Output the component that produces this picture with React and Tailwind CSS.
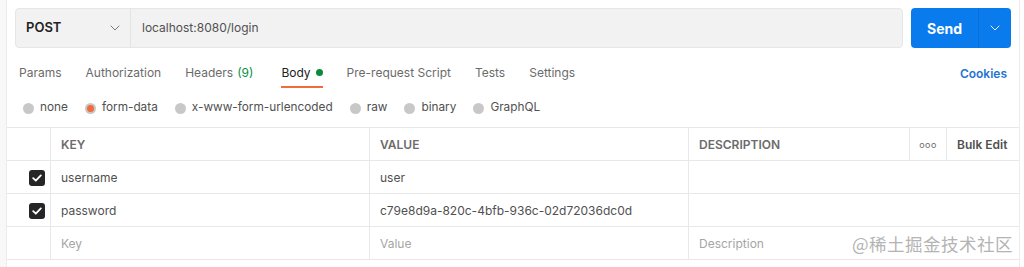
import React from 'react';

const TABS = [
  { label: 'Params' },
  { label: 'Authorization' },
  { label: 'Headers', count: '(9)' },
  { label: 'Body', active: true, dot: true },
  { label: 'Pre-request Script' },
  { label: 'Tests' },
  { label: 'Settings' },
];

const BODY_TYPES = ['none', 'form-data', 'x-www-form-urlencoded', 'raw', 'binary', 'GraphQL'];

const ROWS = [
  { key: 'username', value: 'user' },
  { key: 'password', value: 'c79e8d9a-820c-4bfb-936c-02d72036dc0d' },
];

function Chevron({ className }) {
  return (
    <svg width="10" height="6" viewBox="0 0 10 6" className={className} fill="none">
      <path d="M1 1l4 4 4-4" stroke="currentColor" strokeWidth="1" strokeLinecap="round" strokeLinejoin="round" />
    </svg>
  );
}

function Check() {
  return (
    <span className="w-[16px] h-[16px] rounded-[3px] bg-[#262626] flex items-center justify-center">
      <svg width="10" height="8" viewBox="0 0 10 8" fill="none">
        <path d="M1.2 4.2l2.6 2.5L8.8 1.4" stroke="white" strokeWidth="1.8" strokeLinecap="round" strokeLinejoin="round" />
      </svg>
    </span>
  );
}

export default function App() {
  return (
    <div className="w-[1024px] h-[267px] bg-white flex relative overflow-hidden font-['Inter',sans-serif] text-[#505050]">
      {/* left edge strip */}
      <div className="w-[7px] shrink-0 bg-[#f8f8f8] border-r border-[#ececec]" />

      <div className="flex-1 flex flex-col">
        {/* request bar */}
        <div className="flex items-center gap-[8px] pt-[8px] px-[8px]">
          <div className="flex-1 h-[40px] flex bg-[#f2f2f2] border border-[#e6e6e6] rounded-[4px]">
            <div className="w-[115px] flex items-center justify-between pl-[10px] pr-[10px] border-r border-[#e3e3e3]">
              <span className="text-[13px] font-semibold text-[#212121]">POST</span>
              <Chevron className="text-[#7a7a7a]" />
            </div>
            <div className="flex items-center pl-[11px] text-[12px] text-[#505050]">localhost:8080/login</div>
          </div>
          <div className="w-[100px] h-[40px] flex rounded-[4px] bg-[#097bed] text-white">
            <div className="flex-1 flex items-center justify-center text-[14px] font-bold border-r border-[#0a6fd6]">Send</div>
            <div className="w-[32px] flex items-center justify-center">
              <Chevron className="text-white" />
            </div>
          </div>
        </div>

        {/* tabs */}
        <div className="flex items-center mt-[8px] h-[32px]">
          {TABS.map((t) => (
            <div
              key={t.label}
              className={
                t.active
                  ? 'h-full flex items-center pt-[3px] mx-[12px] border-b-2 border-[#f26b3a] text-[12px] text-[#212121]'
                  : 'h-full flex items-center pt-[3px] mx-[12px] border-b-2 border-transparent text-[12px] text-[#6b6b6b]'
              }
            >
              {t.label}
              {t.count && <span className="ml-[4px] mr-[4px] text-[#0a8f3f]">{t.count}</span>}
              {t.dot && <span className="ml-[5px] w-[7px] h-[7px] rounded-full bg-[#0a8a3c]" />}
            </div>
          ))}
          <div className="ml-auto mr-[12px] pt-[3px] text-[12px] font-semibold text-[#1f74d1]">Cookies</div>
        </div>

        {/* body type radios */}
        <div className="flex items-center h-[39px] pl-[16px] pt-[1px] gap-[17px]">
          {BODY_TYPES.map((b) => (
            <div key={b} className="flex items-center gap-[6px] text-[11.8px] text-[#505050]">
              <span className="w-[11px] h-[11px] rounded-full bg-[#c8c8c8] flex items-center justify-center">
                {b === 'form-data' && <span className="w-[7px] h-[7px] rounded-full bg-[#f26b3a]" />}
              </span>
              {b}
            </div>
          ))}
        </div>

        {/* params table */}
        <div className="border-t border-[#e8e8e8]">
          <div className="flex h-[33px] border-b border-[#e8e8e8] text-[12px] font-semibold text-[#6b6b6b]">
            <div className="w-[44px] border-r border-[#e8e8e8]" />
            <div className="w-[319px] flex items-center pl-[10px] pt-[1px] border-r border-[#e8e8e8]">KEY</div>
            <div className="w-[319px] flex items-center pl-[10px] pt-[1px] border-r border-[#e8e8e8]">VALUE</div>
            <div className="w-[221px] flex items-center pl-[10px] pt-[1px] border-r border-[#e8e8e8]">DESCRIPTION</div>
            <div className="w-[37px] flex items-center justify-center pt-[1px] border-r border-[#e8e8e8] text-[#6b6b6b]">
              <span className="text-[9px] font-normal tracking-[0.5px]">ooo</span>
            </div>
            <div className="flex-1 flex items-center pl-[10px] pt-[1px] text-[#505050]">Bulk Edit</div>
          </div>
          {ROWS.map((r) => (
            <div key={r.key} className="flex h-[33px] border-b border-[#e8e8e8] text-[12px] text-[#505050]">
              <div className="w-[44px] flex items-center justify-end pr-[5px] pt-[1px] border-r border-[#e8e8e8]">
                <Check />
              </div>
              <div className="w-[319px] flex items-center pl-[10px] pt-[1px] border-r border-[#e8e8e8]">{r.key}</div>
              <div className="w-[319px] flex items-center pl-[10px] pt-[1px] border-r border-[#e8e8e8]">{r.value}</div>
              <div className="flex-1" />
            </div>
          ))}
          <div className="flex h-[33px] border-b border-[#e8e8e8] text-[12px] text-[#a6a6a6]">
            <div className="w-[44px] border-r border-[#e8e8e8]" />
            <div className="w-[319px] flex items-center pl-[10px] pt-[1px] border-r border-[#e8e8e8]">Key</div>
            <div className="w-[319px] flex items-center pl-[10px] pt-[1px] border-r border-[#e8e8e8]">Value</div>
            <div className="flex-1 flex items-center pl-[10px] pt-[1px]">Description</div>
          </div>
        </div>
      </div>

      {/* right edge strip */}
      <div className="w-[5px] shrink-0 border-l border-[#ececec]" />

      {/* watermark */}
      <div className="absolute left-[852px] top-[234px] text-[17.5px] leading-[20px] text-[#b4b4b4] font-['Noto_Sans_CJK_SC',sans-serif] tracking-[0.5px]">
        @稀土掘金技术社区
      </div>
    </div>
  );
}
